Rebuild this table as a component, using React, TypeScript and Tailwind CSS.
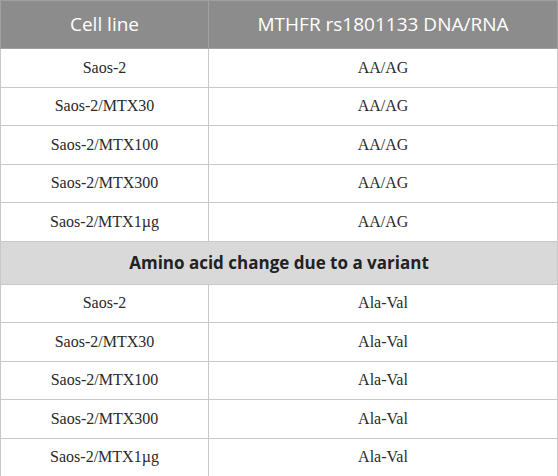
const rows = [
  ['Saos-2', 'AA/AG'],
  ['Saos-2/MTX30', 'AA/AG'],
  ['Saos-2/MTX100', 'AA/AG'],
  ['Saos-2/MTX300', 'AA/AG'],
  ['Saos-2/MTX1µg', 'AA/AG'],
];

const rows2 = [
  ['Saos-2', 'Ala-Val'],
  ['Saos-2/MTX30', 'Ala-Val'],
  ['Saos-2/MTX100', 'Ala-Val'],
  ['Saos-2/MTX300', 'Ala-Val'],
  ['Saos-2/MTX1µg', 'Ala-Val'],
];

function Row({ a, b }: { a: string; b: string }) {
  return (
    <tr className="h-[38.5px]">
      <td className="border border-[#c8c8c8] text-center">{a}</td>
      <td className="border border-[#c8c8c8] text-center">{b}</td>
    </tr>
  );
}

export default function App() {
  return (
    <div className="w-[558px] h-[476px] bg-white">
      <table className="w-[558px] border-collapse table-fixed font-['Liberation_Serif',serif] text-[16px] text-[#2a2a2a]">
        <colgroup>
          <col className="w-[208px]" />
          <col />
        </colgroup>
        <thead>
          <tr className="h-[48px] bg-[#8c8c8c] text-white font-['Open_Sans',sans-serif] text-[19px]">
            <th className="font-normal border border-[#a0a0a0] text-center">Cell line</th>
            <th className="font-normal border border-[#a0a0a0] text-center">MTHFR rs1801133 DNA/RNA</th>
          </tr>
        </thead>
        <tbody>
          {rows.map(([a, b], i) => (
            <Row key={i} a={a} b={b} />
          ))}
          <tr className="h-[43px] bg-[#d9d9d9]">
            <td colSpan={2} className="border border-[#c8c8c8] text-center font-['Open_Sans',sans-serif] font-bold text-[17px] text-[#222]">
              Amino acid change due to a variant
            </td>
          </tr>
          {rows2.map(([a, b], i) => (
            <Row key={i} a={a} b={b} />
          ))}
        </tbody>
      </table>
    </div>
  );
}
